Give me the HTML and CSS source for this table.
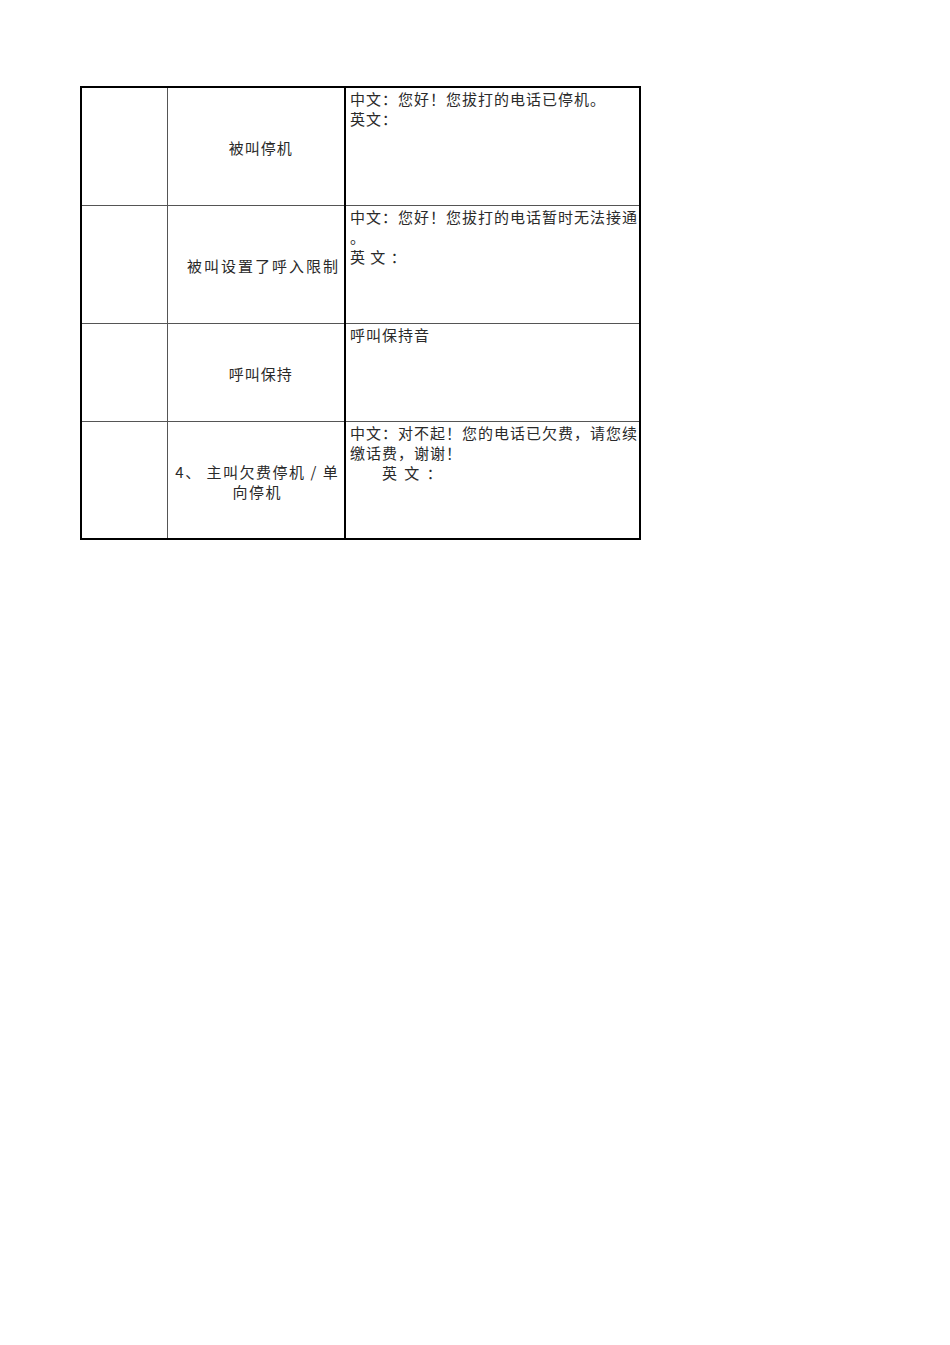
FILE: index.html
```html
<!DOCTYPE html>
<html lang="zh-CN">
<head>
<meta charset="utf-8">
<title>提示音</title>
<link rel="stylesheet" href="styles.css">
</head>
<body>
<table class="sheet">
  <colgroup>
    <col class="c1">
    <col class="c2">
    <col class="c3">
  </colgroup>
  <tbody>
    <tr class="r1">
      <td class="idx"></td>
      <td class="name">被叫停机</td>
      <td class="msg"><span class="ln">中文：您好！您拔打的电话已停机。</span><span class="ln">英文：</span></td>
    </tr>
    <tr class="r2">
      <td class="idx"></td>
      <td class="name wide">被叫设置了呼入限制</td>
      <td class="msg"><span class="ln">中文：您好！您拔打的电话暂时无法接通</span><span class="ln">。</span><span class="ln">英 文 ：</span></td>
    </tr>
    <tr class="r3">
      <td class="idx"></td>
      <td class="name">呼叫保持</td>
      <td class="msg"><span class="ln">呼叫保持音</span></td>
    </tr>
    <tr class="r4">
      <td class="idx"></td>
      <td class="name mid"><span class="ln">4、 主叫欠费停机 / 单</span><span class="ln">向停机</span></td>
      <td class="msg"><span class="ln">中文：对不起！您的电话已欠费，请您续</span><span class="ln">缴话费，谢谢！</span><span class="ln indent">英 文 ：</span></td>
    </tr>
  </tbody>
</table>
</body>
</html>
```
FILE: styles.css
```css
html, body {
  margin: 0;
  padding: 0;
  background: #ffffff;
}

body {
  font-family: "Noto Sans CJK SC", "Liberation Serif", serif;
  color: #2a2a2a;
}

.sheet {
  margin: 86px 0 0 80px;
  border-collapse: collapse;
  table-layout: fixed;
  width: 559px;
  border: 2px solid #000;
}

.c1 { width: 86px; }
.c2 { width: 178px; }
.c3 { width: 295px; }

.sheet td {
  border: 1px solid #555;
  padding: 0;
  font-size: 15px;
  line-height: 20px;
  font-weight: 400;
}

.r1 { height: 118px; }
.r2 { height: 118px; }
.r3 { height: 98px; }
.r4 { height: 118px; }

.sheet td.msg {
  border-left: 2px solid #000;
  border-right: 2px solid #000;
  vertical-align: top;
  padding: 1px 0 0 4px;
  letter-spacing: 1px;
}

.sheet td.name {
  text-align: center;
  vertical-align: middle;
  padding: 3px 0 0 10px;
  letter-spacing: 1px;
}

.sheet td.name.wide {
  letter-spacing: 2px;
  text-align: right;
  padding-right: 4px;
}

.sheet td.name.mid {
  letter-spacing: 1.5px;
  padding: 4px 0 0 3px;
}

.ln {
  display: block;
  white-space: nowrap;
}

.indent {
  padding-left: 32px;
  letter-spacing: 2px;
}
```
